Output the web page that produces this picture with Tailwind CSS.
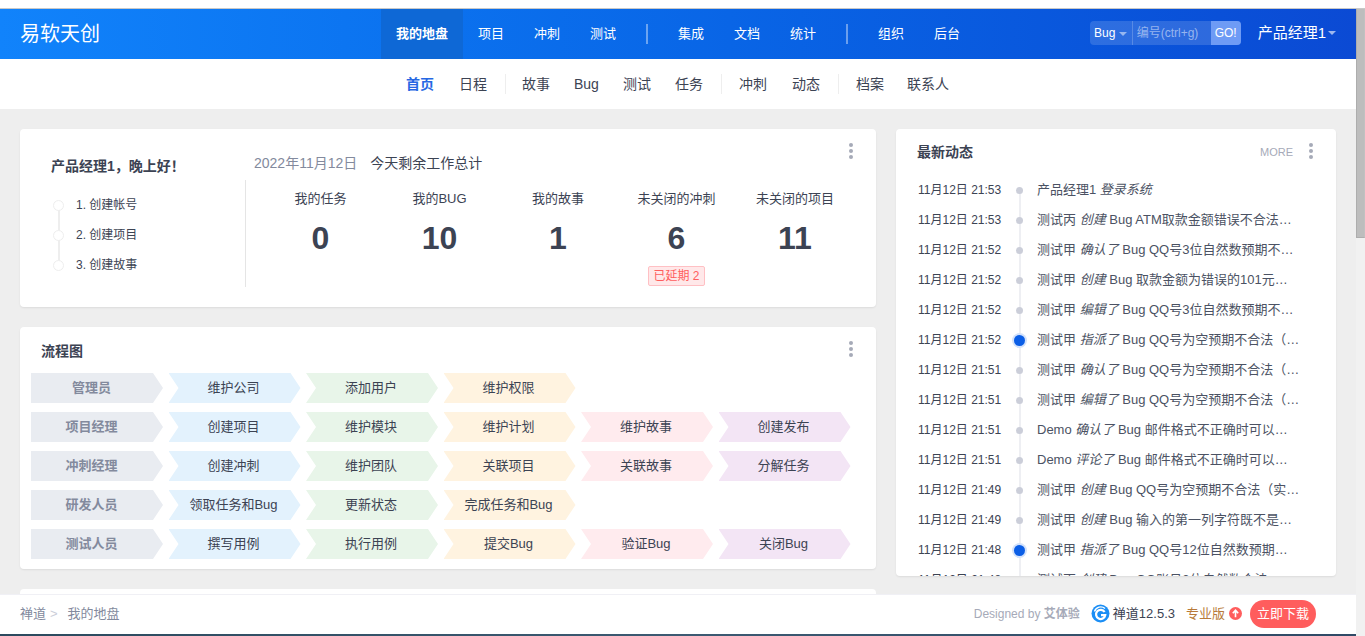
<!DOCTYPE html>
<html lang="zh-CN">

<head>
    <meta charset="UTF-8" />
    <title>我的地盘 - 禅道</title>
    <script src="https://cdn.jsdelivr.net/npm/@tailwindcss/browser@4"></script>
</head>

<body class="relative h-[636px] w-[1365px] overflow-hidden bg-white font-['Liberation_Sans','Noto_Sans_CJK_SC',sans-serif] text-[13px] text-[#3c4353]">
    <div class="flex h-[636px] flex-col">
        <div class="h-[9px] shrink-0 border-b border-[#c8c8c8] bg-white"></div>

        <div class="flex min-h-0 flex-1">
            <div class="flex w-[1356px] flex-col">
                <!-- top bar -->
                <header class="flex h-[50px] shrink-0 items-center bg-linear-to-r from-[#1183fb] to-[#0b4ad4] text-white">
                    <div class="w-[381px] pl-5 text-[20px] leading-[48px]">易软天创</div>
                    <nav class="flex h-full items-center text-[13px]">
                        <a class="flex h-full w-[82px] items-center justify-center bg-[#0e68d6] font-bold">我的地盘</a>
                        <a class="w-14 text-center">项目</a>
                        <a class="w-14 text-center">冲刺</a>
                        <a class="w-14 text-center">测试</a>
                        <span class="mx-[15px] h-5 w-0.5 bg-white/40"></span>
                        <a class="w-14 text-center">集成</a>
                        <a class="w-14 text-center">文档</a>
                        <a class="w-14 text-center">统计</a>
                        <span class="mx-[15px] h-5 w-0.5 bg-white/40"></span>
                        <a class="w-14 text-center">组织</a>
                        <a class="w-14 text-center">后台</a>
                    </nav>
                    <div class="ml-auto mb-0.5 flex items-center pr-[20px]">
                        <div class="flex h-6 w-[151px] overflow-hidden rounded-sm bg-white/15 text-xs">
                            <div class="flex w-[43px] items-center justify-center gap-1 border-r border-white/20">Bug<i class="mt-0.5 border-x-4 border-t-4 border-x-transparent border-t-white/50"></i></div>
                            <div class="flex flex-1 items-center pl-1 text-white/50">编号(ctrl+g)</div>
                            <div class="flex w-[30px] items-center justify-center bg-[#6e9bf5]">GO!</div>
                        </div>
                        <div class="flex items-center pl-[17px] text-[15px]">产品经理1<i class="ml-0.5 border-x-4 border-t-4 border-x-transparent border-t-white/60"></i></div>
                    </div>
                </header>

                <!-- sub nav -->
                <nav class="flex h-[50px] shrink-0 items-center bg-white pl-[394px] text-sm text-[#3c4353]">
                    <a class="px-3 font-bold text-[#2667e3]">首页</a>
                    <a class="ml-px px-3">日程</a>
                    <span class="ml-1.5 mr-1 h-5 w-px bg-[#eee]"></span>
                    <a class="px-3">故事</a>
                    <a class="px-3">Bug</a>
                    <a class="px-3">测试</a>
                    <a class="px-3">任务</a>
                    <span class="ml-1.5 mr-1 h-5 w-px bg-[#eee]"></span>
                    <a class="ml-px px-3">冲刺</a>
                    <a class="ml-px px-3">动态</a>
                    <span class="ml-1.5 mr-1 h-5 w-px bg-[#eee]"></span>
                    <a class="ml-px px-3">档案</a>
                    <a class="-ml-px px-3">联系人</a>
                </nav>

                <main class="flex min-h-0 flex-1 items-start gap-5 overflow-hidden bg-[#eeeeee] px-5 pt-5">
                    <div class="flex w-[856px] shrink-0 flex-col gap-5">
                        <!-- welcome -->
                        <section class="relative flex h-[178px] rounded bg-white shadow-[0_1px_2px_rgba(0,0,0,0.08)]">
                            <div class="absolute right-[23px] top-[14px] flex flex-col gap-[2px]">
                                <i class="size-1 rounded-full bg-[#a6aab8]"></i><i class="size-1 rounded-full bg-[#a6aab8]"></i><i class="size-1 rounded-full bg-[#a6aab8]"></i>
                            </div>
                            <div class="w-[225px] pl-[31px] pt-[27px]">
                                <div class="font-['Liberation_Sans','Noto_Sans_CJK_TC',sans-serif] text-sm font-bold leading-[20px] text-[#3c4353]">产品经理1，晚上好！</div>
                                <div class="relative mt-[14px] flex flex-col">
                                    <div class="absolute left-[7px] top-[14px] h-[60px] w-0.5 bg-[#eee]"></div>
                                    <div class="flex h-[30px] items-center text-xs"><i class="relative ml-0.5 size-[11px] rounded-full border border-[#eee] bg-white"></i><span class="ml-3">1. 创建帐号</span></div>
                                    <div class="flex h-[30px] items-center text-xs"><i class="relative ml-0.5 size-[11px] rounded-full border border-[#eee] bg-white"></i><span class="ml-3">2. 创建项目</span></div>
                                    <div class="flex h-[30px] items-center text-xs"><i class="relative ml-0.5 size-[11px] rounded-full border border-[#eee] bg-white"></i><span class="ml-3">3. 创建故事</span></div>
                                </div>
                            </div>
                            <div class="flex-1">
                                <div class="flex h-[51px] items-end gap-[13px] pb-[7px] pl-[9px] text-sm leading-[20px]">
                                    <span class="text-[#838a9d]">2022年11月12日</span><span>今天剩余工作总计</span>
                                </div>
                                <div class="flex h-[107px] border-l border-[#e5e5e5] pl-[15px]">
                                    <div class="w-[119px] pt-[9px] text-center"><div class="leading-5">我的任务</div><div class="mt-[9px] text-[32px] font-bold leading-10">0</div></div>
                                    <div class="w-[119px] pt-[9px] text-center"><div class="leading-5">我的BUG</div><div class="mt-[9px] text-[32px] font-bold leading-10">10</div></div>
                                    <div class="w-[118px] pt-[9px] text-center"><div class="leading-5">我的故事</div><div class="mt-[9px] text-[32px] font-bold leading-10">1</div></div>
                                    <div class="w-[119px] pt-[9px] text-center"><div class="leading-5">未关闭的冲刺</div><div class="mt-[9px] text-[32px] font-bold leading-10">6</div><span class="mt-2 inline-block rounded-[2px] border border-[#ffc0c4] bg-[#ffe8e9] px-1 text-xs leading-[18px] text-[#ff5d5d]">已延期 2</span></div>
                                    <div class="w-[118px] pt-[9px] text-center"><div class="leading-5">未关闭的项目</div><div class="mt-[9px] text-[32px] font-bold leading-10">11</div></div>
                                </div>
                            </div>
                        </section>

                        <!-- flow chart -->
                        <section class="relative h-[242px] rounded bg-white px-[11px] shadow-[0_1px_2px_rgba(0,0,0,0.08)]">
                            <div class="absolute right-[23px] top-[14px] flex flex-col gap-[2px]">
                                <i class="size-1 rounded-full bg-[#a6aab8]"></i><i class="size-1 rounded-full bg-[#a6aab8]"></i><i class="size-1 rounded-full bg-[#a6aab8]"></i>
                            </div>
                            <div class="pl-2.5 pt-[14px] text-sm font-bold leading-5">流程图</div>
                            <div class="mt-[12px] flex flex-col gap-[9px] text-[13px] leading-[30px]">
                                <div class="flex gap-[5.5px]">
                                    <div class="h-[30px] w-[132px] bg-[#e9ecf1] pr-[11px] text-center font-bold text-[#838a9d] [clip-path:polygon(0_0,122px_0,100%_50%,122px_100%,0_100%)]">管理员</div>
                                    <div class="h-[30px] w-[132px] bg-[#e3f2fd] pr-0.5 text-center [clip-path:polygon(0_0,122px_0,100%_50%,122px_100%,0_100%,10px_50%)]">维护公司</div>
                                    <div class="h-[30px] w-[132px] bg-[#e8f5e9] pr-0.5 text-center [clip-path:polygon(0_0,122px_0,100%_50%,122px_100%,0_100%,10px_50%)]">添加用户</div>
                                    <div class="h-[30px] w-[132px] bg-[#fff3e0] pr-0.5 text-center [clip-path:polygon(0_0,122px_0,100%_50%,122px_100%,0_100%,10px_50%)]">维护权限</div>
                                </div>
                                <div class="flex gap-[5.5px]">
                                    <div class="h-[30px] w-[132px] bg-[#e9ecf1] pr-[11px] text-center font-bold text-[#838a9d] [clip-path:polygon(0_0,122px_0,100%_50%,122px_100%,0_100%)]">项目经理</div>
                                    <div class="h-[30px] w-[132px] bg-[#e3f2fd] pr-0.5 text-center [clip-path:polygon(0_0,122px_0,100%_50%,122px_100%,0_100%,10px_50%)]">创建项目</div>
                                    <div class="h-[30px] w-[132px] bg-[#e8f5e9] pr-0.5 text-center [clip-path:polygon(0_0,122px_0,100%_50%,122px_100%,0_100%,10px_50%)]">维护模块</div>
                                    <div class="h-[30px] w-[132px] bg-[#fff3e0] pr-0.5 text-center [clip-path:polygon(0_0,122px_0,100%_50%,122px_100%,0_100%,10px_50%)]">维护计划</div>
                                    <div class="h-[30px] w-[132px] bg-[#ffebee] pr-0.5 text-center [clip-path:polygon(0_0,122px_0,100%_50%,122px_100%,0_100%,10px_50%)]">维护故事</div>
                                    <div class="h-[30px] w-[132px] bg-[#f3e5f5] pr-0.5 text-center [clip-path:polygon(0_0,122px_0,100%_50%,122px_100%,0_100%,10px_50%)]">创建发布</div>
                                </div>
                                <div class="flex gap-[5.5px]">
                                    <div class="h-[30px] w-[132px] bg-[#e9ecf1] pr-[11px] text-center font-bold text-[#838a9d] [clip-path:polygon(0_0,122px_0,100%_50%,122px_100%,0_100%)]">冲刺经理</div>
                                    <div class="h-[30px] w-[132px] bg-[#e3f2fd] pr-0.5 text-center [clip-path:polygon(0_0,122px_0,100%_50%,122px_100%,0_100%,10px_50%)]">创建冲刺</div>
                                    <div class="h-[30px] w-[132px] bg-[#e8f5e9] pr-0.5 text-center [clip-path:polygon(0_0,122px_0,100%_50%,122px_100%,0_100%,10px_50%)]">维护团队</div>
                                    <div class="h-[30px] w-[132px] bg-[#fff3e0] pr-0.5 text-center [clip-path:polygon(0_0,122px_0,100%_50%,122px_100%,0_100%,10px_50%)]">关联项目</div>
                                    <div class="h-[30px] w-[132px] bg-[#ffebee] pr-0.5 text-center [clip-path:polygon(0_0,122px_0,100%_50%,122px_100%,0_100%,10px_50%)]">关联故事</div>
                                    <div class="h-[30px] w-[132px] bg-[#f3e5f5] pr-0.5 text-center [clip-path:polygon(0_0,122px_0,100%_50%,122px_100%,0_100%,10px_50%)]">分解任务</div>
                                </div>
                                <div class="flex gap-[5.5px]">
                                    <div class="h-[30px] w-[132px] bg-[#e9ecf1] pr-[11px] text-center font-bold text-[#838a9d] [clip-path:polygon(0_0,122px_0,100%_50%,122px_100%,0_100%)]">研发人员</div>
                                    <div class="h-[30px] w-[132px] bg-[#e3f2fd] pr-0.5 text-center [clip-path:polygon(0_0,122px_0,100%_50%,122px_100%,0_100%,10px_50%)]">领取任务和Bug</div>
                                    <div class="h-[30px] w-[132px] bg-[#e8f5e9] pr-0.5 text-center [clip-path:polygon(0_0,122px_0,100%_50%,122px_100%,0_100%,10px_50%)]">更新状态</div>
                                    <div class="h-[30px] w-[132px] bg-[#fff3e0] pr-0.5 text-center [clip-path:polygon(0_0,122px_0,100%_50%,122px_100%,0_100%,10px_50%)]">完成任务和Bug</div>
                                </div>
                                <div class="flex gap-[5.5px]">
                                    <div class="h-[30px] w-[132px] bg-[#e9ecf1] pr-[11px] text-center font-bold text-[#838a9d] [clip-path:polygon(0_0,122px_0,100%_50%,122px_100%,0_100%)]">测试人员</div>
                                    <div class="h-[30px] w-[132px] bg-[#e3f2fd] pr-0.5 text-center [clip-path:polygon(0_0,122px_0,100%_50%,122px_100%,0_100%,10px_50%)]">撰写用例</div>
                                    <div class="h-[30px] w-[132px] bg-[#e8f5e9] pr-0.5 text-center [clip-path:polygon(0_0,122px_0,100%_50%,122px_100%,0_100%,10px_50%)]">执行用例</div>
                                    <div class="h-[30px] w-[132px] bg-[#fff3e0] pr-0.5 text-center [clip-path:polygon(0_0,122px_0,100%_50%,122px_100%,0_100%,10px_50%)]">提交Bug</div>
                                    <div class="h-[30px] w-[132px] bg-[#ffebee] pr-0.5 text-center [clip-path:polygon(0_0,122px_0,100%_50%,122px_100%,0_100%,10px_50%)]">验证Bug</div>
                                    <div class="h-[30px] w-[132px] bg-[#f3e5f5] pr-0.5 text-center [clip-path:polygon(0_0,122px_0,100%_50%,122px_100%,0_100%,10px_50%)]">关闭Bug</div>
                                </div>
                            </div>
                        </section>

                        <section class="h-20 rounded bg-white"></section>
                    </div>

                    <!-- activity -->
                    <section class="relative h-[447px] w-[440px] shrink-0 overflow-hidden rounded bg-white shadow-[0_1px_2px_rgba(0,0,0,0.08)]">
                        <div class="absolute right-[23px] top-[14px] flex flex-col gap-[2px]">
                            <i class="size-1 rounded-full bg-[#a6aab8]"></i><i class="size-1 rounded-full bg-[#a6aab8]"></i><i class="size-1 rounded-full bg-[#a6aab8]"></i>
                        </div>
                        <div class="flex h-[46px] items-center pl-[21px] pr-[43px]">
                            <span class="text-sm font-bold">最新动态</span>
                            <span class="ml-auto text-[11px] text-[#a6aab8]">MORE</span>
                        </div>
                        <ul class="relative text-xs">
                            <div class="absolute left-[123px] top-[15px] h-[420px] w-0.5 bg-[#eeeff3]"></div>
                            <li class="flex h-[30px] items-center"><span class="w-[124px] pl-[22px]">11月12日 21:53</span><i class="relative ml-[-4px] size-[7px] rounded-full bg-[#cbced9]"></i><span class="ml-[14px] whitespace-nowrap text-[13px] text-[#4b5263]">产品经理1 <em>登录系统</em></span></li>
                            <li class="flex h-[30px] items-center"><span class="w-[124px] pl-[22px]">11月12日 21:53</span><i class="relative ml-[-4px] size-[7px] rounded-full bg-[#cbced9]"></i><span class="ml-[14px] whitespace-nowrap text-[13px] text-[#4b5263]">测试丙 <em>创建</em> Bug ATM取款金额错误不合法…</span></li>
                            <li class="flex h-[30px] items-center"><span class="w-[124px] pl-[22px]">11月12日 21:52</span><i class="relative ml-[-4px] size-[7px] rounded-full bg-[#cbced9]"></i><span class="ml-[14px] whitespace-nowrap text-[13px] text-[#4b5263]">测试甲 <em>确认了</em> Bug QQ号3位自然数预期不…</span></li>
                            <li class="flex h-[30px] items-center"><span class="w-[124px] pl-[22px]">11月12日 21:52</span><i class="relative ml-[-4px] size-[7px] rounded-full bg-[#cbced9]"></i><span class="ml-[14px] whitespace-nowrap text-[13px] text-[#4b5263]">测试甲 <em>创建</em> Bug 取款金额为错误的101元…</span></li>
                            <li class="flex h-[30px] items-center"><span class="w-[124px] pl-[22px]">11月12日 21:52</span><i class="relative ml-[-4px] size-[7px] rounded-full bg-[#cbced9]"></i><span class="ml-[14px] whitespace-nowrap text-[13px] text-[#4b5263]">测试甲 <em>编辑了</em> Bug QQ号3位自然数预期不…</span></li>
                            <li class="flex h-[30px] items-center"><span class="w-[124px] pl-[22px]">11月12日 21:52</span><i class="relative ml-[-6px] size-[11px] rounded-full bg-[#0b5ee6] shadow-[0_0_0_2px_#d3e2fb]"></i><span class="ml-[12px] whitespace-nowrap text-[13px] text-[#4b5263]">测试甲 <em>指派了</em> Bug QQ号为空预期不合法（…</span></li>
                            <li class="flex h-[30px] items-center"><span class="w-[124px] pl-[22px]">11月12日 21:51</span><i class="relative ml-[-4px] size-[7px] rounded-full bg-[#cbced9]"></i><span class="ml-[14px] whitespace-nowrap text-[13px] text-[#4b5263]">测试甲 <em>确认了</em> Bug QQ号为空预期不合法（…</span></li>
                            <li class="flex h-[30px] items-center"><span class="w-[124px] pl-[22px]">11月12日 21:51</span><i class="relative ml-[-4px] size-[7px] rounded-full bg-[#cbced9]"></i><span class="ml-[14px] whitespace-nowrap text-[13px] text-[#4b5263]">测试甲 <em>编辑了</em> Bug QQ号为空预期不合法（…</span></li>
                            <li class="flex h-[30px] items-center"><span class="w-[124px] pl-[22px]">11月12日 21:51</span><i class="relative ml-[-4px] size-[7px] rounded-full bg-[#cbced9]"></i><span class="ml-[14px] whitespace-nowrap text-[13px] text-[#4b5263]">Demo <em>确认了</em> Bug 邮件格式不正确时可以…</span></li>
                            <li class="flex h-[30px] items-center"><span class="w-[124px] pl-[22px]">11月12日 21:51</span><i class="relative ml-[-4px] size-[7px] rounded-full bg-[#cbced9]"></i><span class="ml-[14px] whitespace-nowrap text-[13px] text-[#4b5263]">Demo <em>评论了</em> Bug 邮件格式不正确时可以…</span></li>
                            <li class="flex h-[30px] items-center"><span class="w-[124px] pl-[22px]">11月12日 21:49</span><i class="relative ml-[-4px] size-[7px] rounded-full bg-[#cbced9]"></i><span class="ml-[14px] whitespace-nowrap text-[13px] text-[#4b5263]">测试甲 <em>创建</em> Bug QQ号为空预期不合法（实…</span></li>
                            <li class="flex h-[30px] items-center"><span class="w-[124px] pl-[22px]">11月12日 21:49</span><i class="relative ml-[-4px] size-[7px] rounded-full bg-[#cbced9]"></i><span class="ml-[14px] whitespace-nowrap text-[13px] text-[#4b5263]">测试甲 <em>创建</em> Bug 输入的第一列字符既不是…</span></li>
                            <li class="flex h-[30px] items-center"><span class="w-[124px] pl-[22px]">11月12日 21:48</span><i class="relative ml-[-6px] size-[11px] rounded-full bg-[#0b5ee6] shadow-[0_0_0_2px_#d3e2fb]"></i><span class="ml-[12px] whitespace-nowrap text-[13px] text-[#4b5263]">测试甲 <em>指派了</em> Bug QQ号12位自然数预期…</span></li>
                            <li class="flex h-[30px] items-center"><span class="w-[124px] pl-[22px]">11月12日 21:48</span><i class="relative ml-[-4px] size-[7px] rounded-full bg-[#cbced9]"></i><span class="ml-[14px] whitespace-nowrap text-[13px] text-[#4b5263]">测试丙 <em>创建</em> Bug QQ账号3位自然数合法…</span></li>
                        </ul>
                    </section>
                </main>
            </div>

            <!-- scrollbar -->
            <div class="w-[9px] shrink-0 bg-[#f1f1f1]"><div class="h-[229px] border-x border-b border-x-[#adadad] border-r-[#c1c1c1] border-b-[#adadad] bg-[#bdbdbd]"></div></div>
        </div>
    </div>

    <!-- fixed footer -->
    <footer class="absolute bottom-[2px] left-0 flex h-10 w-[1356px] items-center border-t border-[#f0f0f5] bg-white pb-[2px] pl-5 pr-10 text-[13px]">
        <span class="text-[#838a9d]">禅道</span><span class="ml-1 text-[#cbced9]">&gt;</span><span class="ml-2.5 text-[#838a9d]">我的地盘</span>
        <div class="ml-auto flex items-center">
            <span class="text-xs text-[#a6aab8]">Designed by <b class="text-[#a6aab8]">艾体验</b></span>
            <svg class="ml-[11px]" width="19" height="19" viewBox="0 0 19 19">
                <circle cx="9.5" cy="9.5" r="9" fill="#1b8ef5" />
                <path d="M3.5 7.5A6.5 6.5 0 0 1 14 4.5" fill="none" stroke="#fff" stroke-width="1.4" />
                <path d="M13.6 8a4.6 4.6 0 1 0 .6 3.2H10" fill="none" stroke="#fff" stroke-width="2.2" />
            </svg>
            <span class="ml-[3px] text-[#3c4353]">禅道12.5.3</span>
            <span class="ml-[11px] text-[#b87a3a]">专业版</span>
            <svg class="ml-1" width="13" height="13" viewBox="0 0 12 12">
                <circle cx="6" cy="6" r="6" fill="#ff5d5d" />
                <path d="M6 9.5V4M3.5 5.8 6 3l2.5 2.8" fill="none" stroke="#fff" stroke-width="1.5" />
            </svg>
            <span class="ml-2 flex h-7 w-[66px] items-center justify-center rounded-full bg-[#ff5d5d] text-white">立即下载</span>
        </div>
    </footer>
    <div class="absolute bottom-0 left-0 h-[2px] w-[1356px] bg-linear-to-r from-[#2b4a5e] via-[#3c5a72] to-[#2f4a66]"></div>
</body>

</html>
